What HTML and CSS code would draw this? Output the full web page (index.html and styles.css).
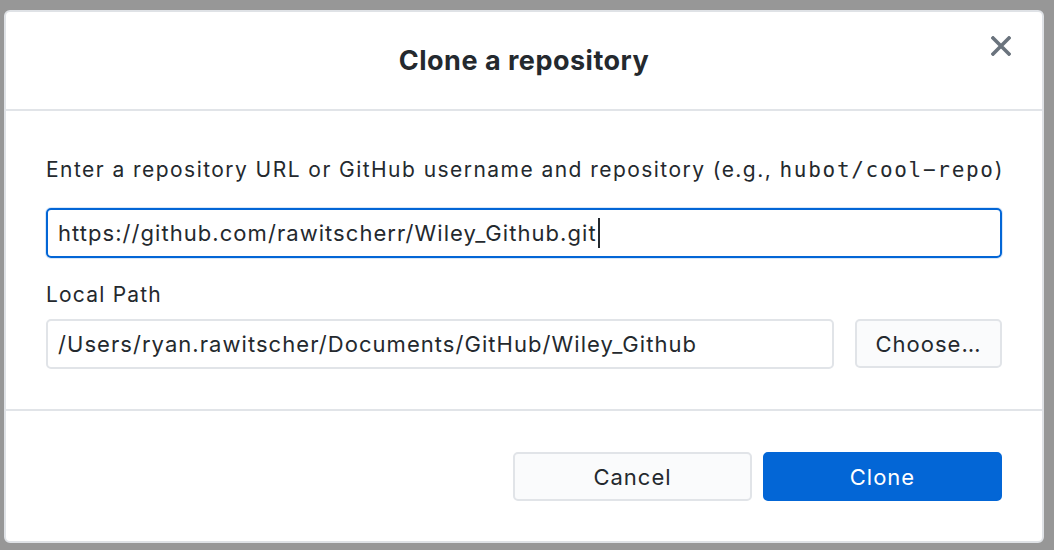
FILE: index.html
```html
<!DOCTYPE html>
<html>
<head>
<meta charset="utf-8">
<link rel="stylesheet" href="styles.css">
</head>
<body>
<div class="dialog">
  <header class="dialog-header">
    <span></span>
    <h1 class="title">Clone a repository</h1>
    <button class="close" aria-label="Close">
      <svg width="20" height="20" viewBox="0 0 20 20"><path d="M2 2 L18 18 M18 2 L2 18" stroke="#6a737d" stroke-width="3.6" stroke-linecap="square"/></svg>
    </button>
  </header>
  <section class="dialog-body">
    <label class="label first">Enter a repository URL or GitHub username and repository (e.g., <code class="mono">hubot/cool−repo</code>)</label>
    <div class="input focused"><span>https://github.com/rawitscherr/Wiley_Github.git</span><span class="caret"></span></div>
    <label class="label second">Local Path</label>
    <div class="path-row">
      <div class="input path">/Users/ryan.rawitscher/Documents/GitHub/Wiley_Github</div>
      <button class="btn choose">Choose…</button>
    </div>
  </section>
  <footer class="dialog-footer">
    <button class="btn cancel">Cancel</button>
    <button class="btn primary">Clone</button>
  </footer>
</div>
</body>
</html>
```
FILE: styles.css
```css
html, body {
  margin: 0;
  padding: 0;
}
body {
  background: #979797;
  width: 1054px;
  height: 550px;
  box-sizing: border-box;
  padding: 10px 10px 7px 4px;
  font-family: Inter, Roboto, "Liberation Sans", sans-serif;
  color: #24292e;
}
.dialog {
  box-sizing: border-box;
  width: 1040px;
  height: 533px;
  background: #fff;
  border: 2px solid #dfe2e6;
  border-radius: 6px;
  display: flex;
  flex-direction: column;
  overflow: hidden;
}
.dialog-header {
  height: 97px;
  border-bottom: 2px solid #e1e4e8;
  display: grid;
  grid-template-columns: 1fr auto 1fr;
  align-items: center;
}
.title {
  margin: 0;
  font-size: 27px;
  font-weight: 700;
  color: #24292e;
  letter-spacing: 0.5px;
}
.close {
  justify-self: end;
  margin-right: 31px;
  margin-top: -30px;
  background: none;
  border: 0;
  padding: 0;
  width: 20px;
  height: 20px;
  display: flex;
}
.dialog-body {
  padding: 44px 40px 40px 40px;
  border-bottom: 2px solid #e1e4e8;
  display: flex;
  flex-direction: column;
}
.label {
  display: block;
  font-size: 21px;
  line-height: 30px;
  letter-spacing: 1.45px;
  color: #24292e;
  white-space: nowrap;
}
.mono {
  font-family: "DejaVu Sans Mono", "Liberation Mono", monospace;
  font-size: 21px;
  letter-spacing: 1.7px;
}
.label.first { margin-bottom: 23px; }
.label.second { margin-top: 22px; margin-bottom: 9px; letter-spacing: 1.2px; }
.input {
  box-sizing: border-box;
  height: 50px;
  border: 2px solid #e1e4e8;
  border-radius: 5px;
  padding: 0 10px;
  display: flex;
  align-items: center;
  font-size: 22px;
  letter-spacing: 1.05px;
  color: #24292e;
  white-space: nowrap;
}
.input.focused {
  border-color: #0366d6;
  box-shadow: 0 0 0 1px rgba(3, 102, 214, 0.15);
}
.caret {
  display: inline-block;
  width: 2px;
  height: 30px;
  background: #24292e;
  margin-left: 1px;
}
.path-row {
  display: flex;
  gap: 21px;
}
.input.path { flex: 1; }
.btn {
  box-sizing: border-box;
  height: 49px;
  border-radius: 5px;
  font-family: inherit;
  font-size: 22px;
  letter-spacing: 1px;
  color: #24292e;
  background: #fafbfc;
  border: 2px solid #e1e4e8;
  padding: 0;
}
.choose { width: 147px; }
.dialog-footer {
  flex: 1;
  display: flex;
  justify-content: flex-end;
  align-items: flex-start;
  gap: 11px;
  padding: 41px 40px 0 0;
}
.cancel, .primary { width: 239px; }
.primary {
  background: #0366d6;
  border-color: #0366d6;
  color: #fff;
}
```
